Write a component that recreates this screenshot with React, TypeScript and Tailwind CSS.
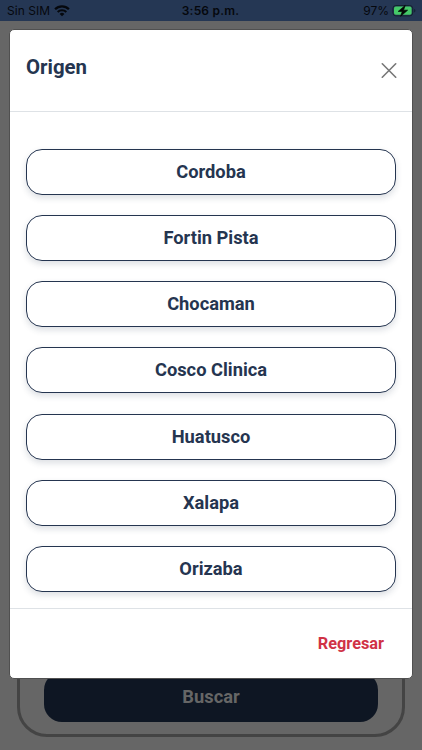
import React from "react";
import { clsx } from "clsx";

const origins = [
  "Cordoba",
  "Fortin Pista",
  "Chocaman",
  "Cosco Clinica",
  "Huatusco",
  "Xalapa",
  "Orizaba",
];

const WifiIcon = () => (
  <svg viewBox="0 0 16 12" className="w-4 h-3 text-[#05080d]" fill="none" stroke="currentColor">
    <path d="M1.1 4.2a9.8 9.8 0 0 1 13.8 0" strokeWidth="2.3" />
    <path d="M3.7 7a6.1 6.1 0 0 1 8.6 0" strokeWidth="2.1" />
    <path d="M8 11.3 5.6 8.9a3.4 3.4 0 0 1 4.8 0Z" fill="currentColor" stroke="none" />
  </svg>
);

const BatteryIcon = () => (
  <svg viewBox="0 0 25 14" className="w-[25px] h-3.5">
    <rect x="0.9" y="1.5" width="19.8" height="10.4" rx="3" fill="none" stroke="#14202f" strokeWidth="1" />
    <rect x="2" y="2.6" width="17.6" height="8.2" rx="1.8" fill="#45c968" />
    <path d="M22.2 5.1v3.3c.8-.3 1.2-.9 1.2-1.6s-.4-1.4-1.2-1.7Z" fill="#14202f" />
    <path
      d="M13.2 1.4 6.2 7.4h4.1l-1.7 4.9 7-6.1h-4.1Z"
      fill="#030705"
      stroke="#030705"
      strokeWidth="0.7"
      strokeLinejoin="round"
    />
  </svg>
);

const StatusBar = () => (
  <div className="grid grid-cols-3 items-center h-[21px] shrink-0 pl-[7px] pr-[5px] bg-[#253754] font-[Inter,sans-serif] text-[12px] text-[#05080d]">
    <div className="flex items-center gap-1">
      <span className="tracking-[0.05px]">Sin SIM</span>
      <WifiIcon />
    </div>
    <span className="pr-[3px] text-center font-semibold tracking-[0.2px]">3:56 p.m.</span>
    <div className="flex items-center justify-end gap-[3px]">
      <span>97%</span>
      <BatteryIcon />
    </div>
  </div>
);

const OriginModal = () => (
  <div
    role="dialog"
    aria-label="Origen"
    className="absolute left-[9px] top-[29px] flex flex-col w-[404px] h-[650px] rounded-[5px] border border-[#505050] bg-white overflow-hidden"
  >
    <header className="flex justify-between h-[82px] shrink-0 px-4 border-b border-[#dee2e6]">
      <h1 className="mt-[22px] text-[20.4px] leading-[30px] font-bold text-[#253550]">Origen</h1>
      <button aria-label="Cerrar" className="mt-8 -mr-px w-4 h-4">
        <svg viewBox="0 0 16 16" className="w-4 h-4" stroke="#777" strokeWidth="1.6" strokeLinecap="round">
          <path d="m1.3 1.8 13.4 13.4M14.7 1.8 1.3 15.2" />
        </svg>
      </button>
    </header>

    <div className="flex flex-col gap-[20.2px] flex-1 min-h-0 px-4 pt-[36.9px] overflow-hidden">
      {origins.map((name) => (
        <button
          key={name}
          className={clsx(
            "h-[46px] shrink-0 rounded-[16px] border border-[#253550] bg-white",
            "text-[18.3px] leading-6 font-bold text-[#253550] shadow-[0_3px_6px_rgba(37,53,80,0.16)]",
          )}
        >
          {name}
        </button>
      ))}
    </div>

    <footer className="flex items-center justify-end h-[70px] shrink-0 pr-7 border-t border-[#dee2e6]">
      <button className="text-[16.3px] leading-6 font-bold text-[#d03245]">Regresar</button>
    </footer>
  </div>
);

export default function App() {
  return (
    <main className="relative flex flex-col w-[422px] h-[750px] overflow-hidden bg-[#666] font-[Roboto,sans-serif]">
      <StatusBar />

      {/* Search form dimmed behind the modal */}
      <div className="flex flex-col justify-end flex-1 mt-7 mb-[13px] mx-[17px] px-6 pb-3 rounded-[30px] border-3 border-[#444]">
        <button className="h-[50px] rounded-[18px] bg-[#0e1623] text-[18.3px] font-bold text-[#666]">
          Buscar
        </button>
      </div>

      <OriginModal />
    </main>
  );
}
